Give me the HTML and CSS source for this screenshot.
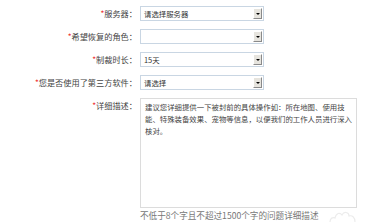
FILE: index.html
```html
<!DOCTYPE html>
<html lang="zh-CN">
<head>
    <meta charset="UTF-8">
    <title>申诉表单</title>
    <link rel="stylesheet" href="styles.css">
</head>
<body>
    <div class="form">
        <div class="row">
            <label class="label"><em>*</em>服务器：</label>
            <div class="select"><span>请选择服务器</span><i class="arrow"></i></div>
        </div>
        <div class="row">
            <label class="label"><em>*</em>希望恢复的角色：</label>
            <div class="select"><span></span><i class="arrow"></i></div>
        </div>
        <div class="row">
            <label class="label"><em>*</em>制裁时长：</label>
            <div class="select"><span>15天</span><i class="arrow"></i></div>
        </div>
        <div class="row">
            <label class="label"><em>*</em>您是否使用了第三方软件：</label>
            <div class="select"><span>请选择</span><i class="arrow"></i></div>
        </div>
        <div class="row row-top">
            <label class="label"><em>*</em>详细描述：</label>
            <div class="field">
                <div class="textarea">建议您详细提供一下被封前的具体操作如：所在地图、使用技能、特殊装备效果、宠物等信息，以便我们的工作人员进行深入核对。</div>
                <p class="hint">不低于8个字且不超过1500个字的问题详细描述</p>
            </div>
        </div>
    </div>
    <svg class="mark" width="30" height="14" viewBox="0 0 30 14">
        <path d="M2 13 C2 9 5 8 7 9 C8 4 12 3 14 6 C16 2 21 3 21 7 C24 6 27 8 27 13" fill="none" stroke="#ececec" stroke-width="1.2"/>
    </svg>
</body>
</html>
```

FILE: styles.css
```css
body {
    margin: 0;
    background: #fff;
    font-family: "Noto Sans CJK SC", "Noto Sans", sans-serif;
    color: #444;
    position: relative;
    height: 222px;
    overflow: hidden;
}
.form {
    padding-top: 6px;
}
.row {
    display: flex;
    align-items: center;
    margin-bottom: 8px;
}
.row-top {
    align-items: flex-start;
    margin-top: 1px;
}
.label {
    width: 140px;
    flex: none;
    text-align: right;
    font-size: 8.2px;
    line-height: 15px;
    padding-right: 3px;
    box-sizing: border-box;
}
.label em {
    color: #e33;
    font-style: normal;
}
.select {
    width: 124px;
    height: 15px;
    box-sizing: border-box;
    border: 1px solid #c9d6e3;
    background: #fff;
    display: flex;
    align-items: center;
    justify-content: space-between;
    padding-left: 3px;
    padding-right: 1px;
    font-size: 7.4px;
    color: #333;
}
.arrow {
    width: 9px;
    height: 11px;
    box-sizing: border-box;
    background: #e6e4de;
    border-right: 1px solid #8a8a8a;
    border-bottom: 1px solid #8a8a8a;
    border-left: 1px solid #fff;
    border-top: 1px solid #fff;
    position: relative;
}
.arrow::after {
    content: "";
    position: absolute;
    left: 2px;
    top: 4px;
    border-left: 2px solid transparent;
    border-right: 2px solid transparent;
    border-top: 2px solid #000;
}
.field {
    width: 217px;
}
.textarea {
    height: 110px;
    box-sizing: border-box;
    border: 1px solid #dcdcdc;
    padding: 2px 4px;
    font-size: 7.4px;
    line-height: 12px;
    color: #444;
}
.hint {
    margin: 2px 0 0;
    font-size: 8.6px;
    line-height: 11px;
    color: #777;
    white-space: nowrap;
}
.mark {
    position: absolute;
    left: 328px;
    top: 209px;
}
```
